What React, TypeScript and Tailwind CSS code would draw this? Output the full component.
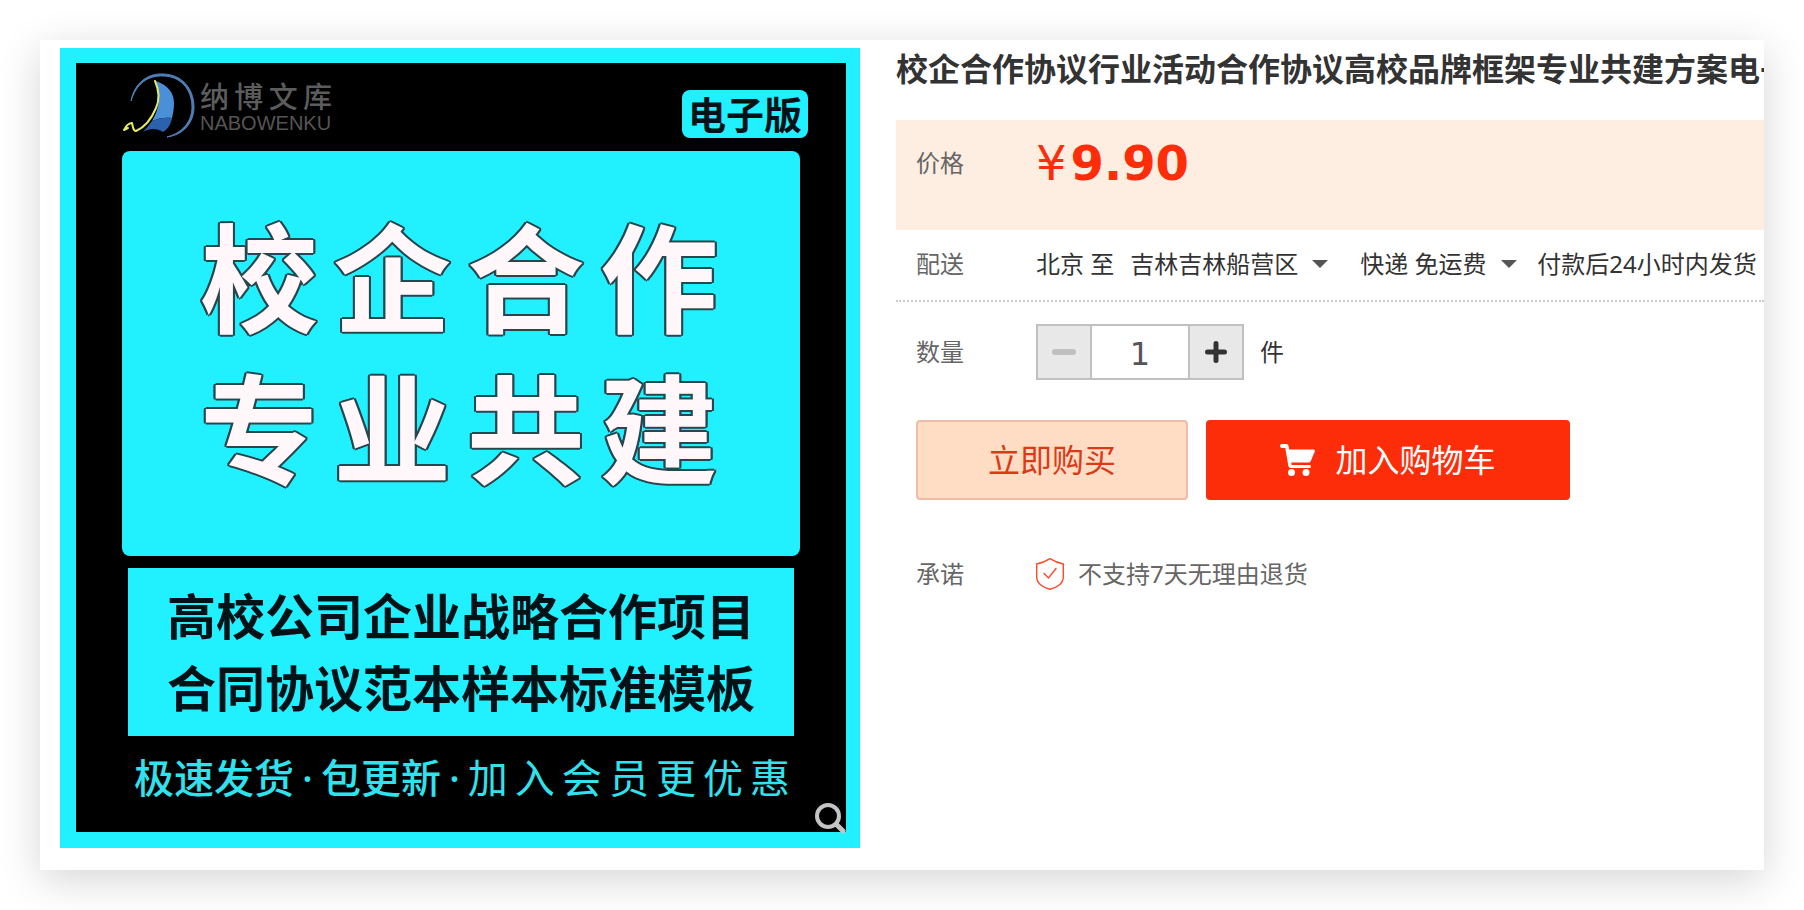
import { useState, type ReactNode } from "react";
import { clsx } from "clsx";

const TITLE = "校企合作协议行业活动合作协议高校品牌框架专业共建方案电子版";

interface RowProps {
  label: string;
  htmlFor?: string;
  className?: string;
  children: ReactNode;
}

const Row = ({ label, htmlFor, className, children }: RowProps) => {
  const labelClass = "w-30 shrink-0 text-2xl text-[#666]";
  return (
    <div className={clsx("flex items-center pl-5 whitespace-nowrap", className)}>
      {htmlFor ? (
        <label htmlFor={htmlFor} className={labelClass}>
          {label}
        </label>
      ) : (
        <span className={labelClass}>{label}</span>
      )}
      {children}
    </div>
  );
};

interface PickerProps {
  label: string;
  value: string;
}

const Picker = ({ label, value }: PickerProps) => (
  <span className="flex shrink-0 items-center gap-3.5">
    <select aria-label={label} className="appearance-none bg-transparent">
      <option>{value}</option>
    </select>
    <svg className="h-2 w-4 text-[#555]" viewBox="0 0 16 8" aria-hidden="true">
      <path d="M0 0h16L8 8z" fill="currentColor" />
    </svg>
  </span>
);

const Logo = () => (
  <div className="flex items-center gap-1">
    <svg width="74" height="68" viewBox="0 0 74 68" fill="none" aria-hidden="true">
      <path
        d="M9 30C12 13 25 2 41 3c18 0 31 14 31 33 0 16-11 28-27 30 15-4 25-15 25-30C70 18 58 5 41 5 26 4 14 13 9 30z"
        fill="#4f7fb8"
        stroke="#4f7fb8"
        strokeWidth="1"
      />
      <path d="M34 10c11 4 18 11 18 22 0 6-1 10-2 15-7-1-13 0-20 3 6-10 10-23 4-40z" fill="#4a90d9" />
      <path d="M30 50c7-3 13-4 20-3-1 6-4 11-9 14-6-4-13-4-20 0 3-3 6-7 9-11z" fill="#2b62ab" />
      <path
        d="M33 10c4 9 5 18 1 27-5 12-13 20-20 23-3 0-3-4-4-8-3 0-6 3-8 7l4-2"
        stroke="#e6ec62"
        strokeWidth="2"
        strokeLinecap="round"
        strokeLinejoin="round"
      />
    </svg>
    <div className="w-33 pt-1">
      <p className="text-[29px] leading-8 font-medium text-[#5c5c5c] [text-align-last:justify]">
        纳博文库
      </p>
      <p className="font-['Liberation_Sans',sans-serif] text-xl leading-5 text-[#555]">
        NABOWENKU
      </p>
    </div>
  </div>
);

const Cover = () => (
  <div className="relative flex aspect-square w-200 shrink-0 flex-col border-16 border-t-15 border-r-14 border-[#20f0ff] bg-black">
    <div className="flex h-22 items-start justify-between pt-2 pr-[38px] pl-[46px]">
      <Logo />
      <span className="mt-[19px] rounded-lg bg-[#20f0ff] px-1.5 text-[38px] leading-12 font-bold text-[#021216]">
        电子版
      </span>
    </div>
    <div className="mx-[46px] flex h-[405px] flex-col rounded-lg bg-[#20f0ff] pt-13 pr-[82px] pl-[78px]">
      <h2 className="text-[118px] leading-[151px] font-bold text-[#fff7f9] [text-shadow:2px_0_#27464d,-2px_0_#27464d,0_2px_#27464d,0_-2px_#27464d,2px_1px_#27464d,-2px_1px_#27464d,2px_-1px_#27464d,-2px_-1px_#27464d]">
        <span className="block [text-align-last:justify]">校企合作</span>
        <span className="block [text-align-last:justify]">专业共建</span>
      </h2>
    </div>
    <div className="mx-[52px] mt-3 flex h-[168px] flex-col items-center justify-center bg-[#20f0ff] text-[49px] leading-18 font-bold whitespace-nowrap text-[#021216]">
      <p>高校公司企业战略合作项目</p>
      <p>合同协议范本样本标准模板</p>
    </div>
    <div className="mt-3 flex pr-14 pl-[58px] text-[40px] leading-15 whitespace-nowrap text-[#2fe3ee]">
      <strong className="font-medium">
        极速发货<span className="mx-2">·</span>包更新<span className="mx-2">·</span>
      </strong>
      <span className="flex-1 [text-align-last:justify]">加入会员更优惠</span>
    </div>
    <button type="button" aria-label="查看大图" className="absolute right-0 -bottom-0.5">
      <svg width="32" height="32" viewBox="0 0 32 32" fill="none" stroke="#c4c4c4">
        <circle cx="14" cy="14" r="11" strokeWidth="4" />
        <path d="M22.500 22.500 29 29" strokeWidth="5" strokeLinecap="round" />
      </svg>
    </button>
  </div>
);

const Stepper = () => {
  const [count, setCount] = useState(1);

  return (
    <div className="flex h-14 divide-x-2 divide-[#c0c0c0] border-2 border-[#c0c0c0]">
      <button
        type="button"
        aria-label="减少"
        disabled={count <= 1}
        onClick={() => setCount(count - 1)}
        className="flex w-[54px] items-center justify-center bg-[#e8e8e8] text-[#333] disabled:text-[#c0c0c0]"
      >
        <svg width="24" height="24" viewBox="0 0 24 24" stroke="currentColor" aria-hidden="true">
          <path d="M3 12h18" strokeWidth="6" strokeLinecap="round" />
        </svg>
      </button>
      <input
        id="quantity"
        inputMode="numeric"
        value={count}
        onChange={(e) => setCount(Math.max(1, Number(e.target.value) || 1))}
        className="w-[98px] pt-1 text-center font-['DejaVu_Sans',sans-serif] text-[32px] text-[#555]"
      />
      <button
        type="button"
        aria-label="增加"
        onClick={() => setCount(count + 1)}
        className="flex w-13 items-center justify-center bg-[#e8e8e8] text-[#333]"
      >
        <svg width="24" height="24" viewBox="0 0 24 24" stroke="currentColor" aria-hidden="true">
          <path d="M3.500 12h17M12 3.500v17" strokeWidth="5" strokeLinecap="round" />
        </svg>
      </button>
    </div>
  );
};

const CartIcon = () => (
  <svg width="35" height="32" viewBox="0 0 35 32" fill="currentColor" aria-hidden="true">
    <path d="M2 0h4c1.500 0 2.300.8 2.600 2.200L9.200 5.500h24c1.300 0 2 .8 1.600 2l-4 9.500c-.5 1-1.200 1.500-2.300 1.500H11.300l.4 2.500h19v3H11c-1.500 0-2.400-.8-2.700-2.200L5.300 4H2a2 2 0 0 1 0-4z" />
    <circle cx="11.500" cy="28.500" r="3.500" />
    <circle cx="26" cy="28.500" r="3.500" />
  </svg>
);

const ShieldIcon = () => (
  <svg
    width="28"
    height="32"
    viewBox="0 0 28 32"
    fill="none"
    stroke="#fc4a26"
    strokeWidth="1.4"
    aria-hidden="true"
  >
    <path d="M14 .7c4 2.600 8.500 4.500 13.300 5.300v13c0 6.500-6.500 10.800-13.300 12.300C7.200 29.800.7 25.500.7 19V6C5.500 5.200 10 3.300 14 .7z" />
    <path d="m8 15.500 4.500 4.500 7.500-9.500" strokeLinecap="round" />
  </svg>
);

const Details = () => (
  <section className="min-w-0 flex-1 text-[#333]">
    <h1 className="h-18 text-[32px] leading-[42px] font-bold whitespace-nowrap">{TITLE}</h1>
    <Row label="价格" className="h-[110px] bg-[#feede1] pb-6">
      <span className="flex items-baseline gap-1 font-['DejaVu_Sans',sans-serif] text-5xl text-[#fd2d0a]">
        <span>¥</span>
        <strong className="font-bold">9.90</strong>
      </span>
    </Row>
    <Row label="配送" className="h-18 border-b-2 border-dotted border-[#ccc] pb-0.5 text-2xl">
      <span className="mr-4">北京 至</span>
      <Picker label="配送至" value="吉林吉林船营区" />
      <span className="w-8" />
      <Picker label="快递" value="快递 免运费" />
      <span className="ml-5">付款后24小时内发货</span>
    </Row>
    <Row label="数量" htmlFor="quantity" className="mt-[22px] text-2xl">
      <Stepper />
      <span className="ml-4">件</span>
    </Row>
    <div className="mt-10 flex gap-[18px] pl-5 text-[32px] whitespace-nowrap">
      <button
        type="button"
        className="h-20 w-68 rounded-sm border-2 border-[#efbda6] bg-[#ffdcc4] text-[#dc3a17]"
      >
        立即购买
      </button>
      <button
        type="button"
        className="flex h-20 w-91 items-center justify-center gap-5 rounded-sm bg-[#fd2d0a] text-white"
      >
        <CartIcon />
        加入购物车
      </button>
    </div>
    <Row label="承诺" className="mt-[58px] text-2xl text-[#666]">
      <ShieldIcon />
      <span className="ml-3.5">不支持7天无理由退货</span>
    </Row>
  </section>
);

export default function App() {
  return (
    <main className="min-h-screen bg-white p-10 font-['Noto_Sans','Noto_Sans_CJK_SC',sans-serif]">
      <article className="flex gap-9 overflow-hidden bg-white pt-2 pb-[22px] pl-5 shadow-[0_10px_40px_rgba(0,0,0,0.165)]">
        <Cover />
        <Details />
      </article>
    </main>
  );
}
